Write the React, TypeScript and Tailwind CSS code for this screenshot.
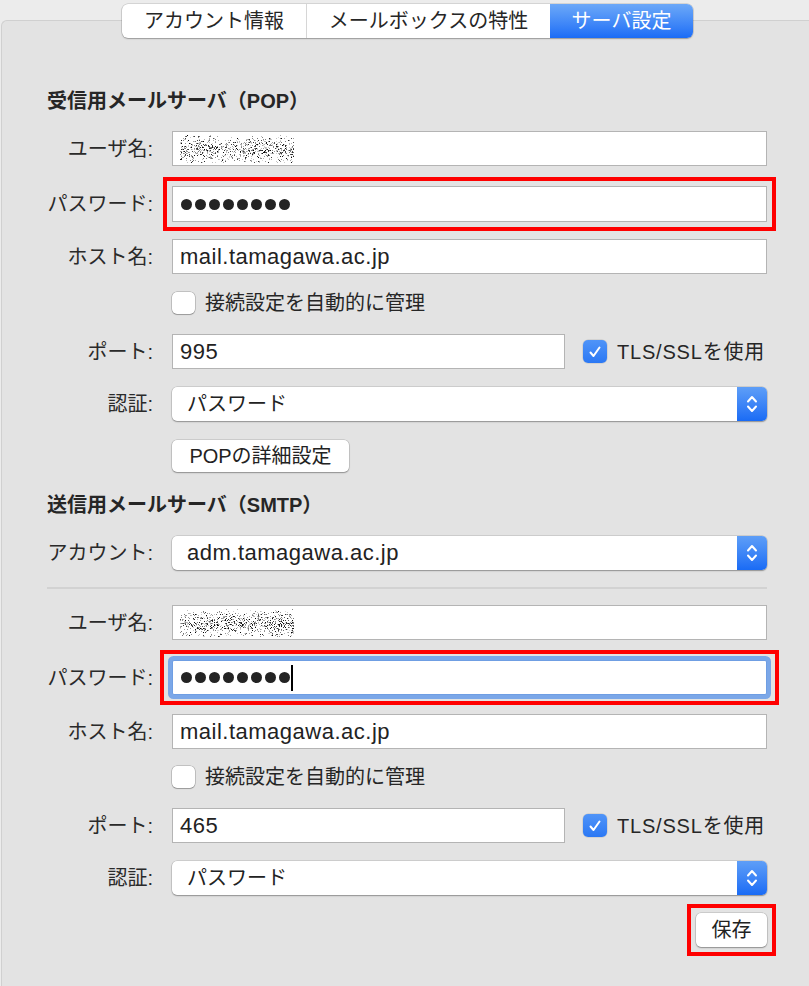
import { useMemo, type ReactNode } from "react";

function mulberry(seed: number) {
  let a = seed;
  return () => {
    a |= 0;
    a = (a + 0x6d2b79f5) | 0;
    let t = Math.imul(a ^ (a >>> 15), 1 | a);
    t = (t + Math.imul(t ^ (t >>> 7), 61 | t)) ^ t;
    return ((t ^ (t >>> 14)) >>> 0) / 4294967296;
  };
}

// blurred-out user name, drawn as speckle
function Noise({ seed }: { seed: number }) {
  const dots = useMemo(() => {
    const rnd = mulberry(seed);
    const out: { x: number; y: number; g: number }[] = [];
    for (let i = 0; i < 2400; i++) {
      const x = Math.floor(rnd() * 114);
      const y = Math.floor(rnd() * 29);
      const d = Math.abs(y - 15) / 15;
      if (rnd() < d * 0.7 + 0.3) continue;
      const dark = rnd() < 0.4 - d * 0.25;
      out.push({ x, y, g: dark ? Math.floor(rnd() * 90) : 110 + Math.floor(rnd() * 110) });
    }
    return out;
  }, [seed]);

  return (
    <svg width="114" height="29" className="shrink-0">
      {dots.map((d, i) => (
        <rect key={i} x={d.x} y={d.y} width="1" height="1" fill={`rgb(${d.g},${d.g},${d.g})`} />
      ))}
    </svg>
  );
}

function Dots() {
  return (
    <div className="flex gap-[3px]">
      {Array.from({ length: 8 }).map((_, i) => (
        <span key={i} className="h-[11px] w-[11px] rounded-full bg-[#232323]" />
      ))}
    </div>
  );
}

function Row({ label, children, className = "" }: { label: string; children: ReactNode; className?: string }) {
  return (
    <div className={`flex items-center ${className}`}>
      <div className="w-[106px] shrink-0 text-right text-[20px] text-[#2a2a2a]">{label}</div>
      <div className="ml-[19px] flex flex-1 items-center">{children}</div>
    </div>
  );
}

function Field({ children, className = "" }: { children?: ReactNode; className?: string }) {
  return (
    <div className={`flex h-[35px] items-center border border-[#b4b4b4] bg-white pl-[7px] text-[22px] tracking-[0.5px] text-[#222] ${className}`}>
      {children}
    </div>
  );
}

function Stepper() {
  return (
    <div className="flex w-[30px] items-center justify-center self-stretch rounded-r-[5px] bg-gradient-to-b from-[#5e9ef7] to-[#196bf5]">
      <svg width="12" height="22" viewBox="0 0 12 22">
        <path d="M2 8.5 L6 4 L10 8.5 M2 13.5 L6 18 L10 13.5" stroke="white" strokeWidth="2" fill="none" strokeLinecap="round" strokeLinejoin="round" />
      </svg>
    </div>
  );
}

function Select({ value, latin = false }: { value: string; latin?: boolean }) {
  return (
    <div className="flex h-[34px] flex-1 rounded-[5px] bg-white shadow-[0_0_0_0.5px_rgba(0,0,0,0.18),0_1px_1.5px_rgba(0,0,0,0.3)]">
      <div className={`flex flex-1 items-center pl-[15px] text-[#222] ${latin ? "text-[22px] tracking-[0.5px]" : "text-[20px]"}`}>{value}</div>
      <Stepper />
    </div>
  );
}

function Check({ checked = false }: { checked?: boolean }) {
  if (checked) {
    return (
      <span className="flex h-[23px] w-[24px] shrink-0 items-center justify-center rounded-[5px] bg-gradient-to-b from-[#4f94f8] to-[#2b78f4] shadow-[0_0_0_0.5px_rgba(0,0,0,0.15)]">
        <svg width="16" height="16" viewBox="0 0 16 16">
          <path d="M3.5 8.5 L6.5 12 L12.5 3.5" stroke="white" strokeWidth="2" fill="none" strokeLinecap="round" strokeLinejoin="round" />
        </svg>
      </span>
    );
  }
  return (
    <span className="h-[22px] w-[23px] shrink-0 rounded-[5px] bg-white shadow-[0_0_0_0.5px_rgba(0,0,0,0.3),0_1px_1px_rgba(0,0,0,0.2)]" />
  );
}

function Button({ children, className = "" }: { children: ReactNode; className?: string }) {
  return (
    <div className={`flex items-center justify-center rounded-[5px] bg-white text-[20px] text-[#222] shadow-[0_0_0_0.5px_rgba(0,0,0,0.2),0_1px_1.5px_rgba(0,0,0,0.3)] ${className}`}>
      {children}
    </div>
  );
}

function Heading({ children, className = "" }: { children: ReactNode; className?: string }) {
  return <div className={`h-[24px] text-[20px] font-bold leading-[24px] text-[#262626] ${className}`}>{children}</div>;
}

function Option({ label, checked = false }: { label: string; checked?: boolean }) {
  return (
    <div className="flex items-center gap-[10px] text-[20px] text-[#262626]">
      <Check checked={checked} />
      <span className={checked ? "tracking-[0.8px]" : ""}>{label}</span>
    </div>
  );
}

export default function App() {
  return (
    <div className="h-[986px] w-[809px] overflow-hidden bg-[#ececec] pt-[4px] leading-[22px] font-['Liberation_Sans','Noto_Sans_CJK_JP',sans-serif]">
      {/* Tabs */}
      <div className="relative z-10 ml-[122px] flex h-[34px] w-[571px] overflow-hidden rounded-[6px] bg-white text-[20px] text-[#262626] shadow-[0_0_0_0.5px_rgba(0,0,0,0.2),0_1px_1.5px_rgba(0,0,0,0.25)]">
        <div className="flex w-[185px] items-center justify-center border-r border-[#d6d6d6]">アカウント情報</div>
        <div className="flex w-[243px] items-center justify-center">メールボックスの特性</div>
        <div className="flex flex-1 items-center justify-center bg-gradient-to-b from-[#6ca8f8] to-[#1a6cf6] text-white">サーバ設定</div>
      </div>

      {/* Panel */}
      <div className="-mt-[18px] ml-[1px] h-[1000px] rounded-tl-[6px] border-l border-t border-[#d0d0d0] bg-[#e3e3e3] pl-[45px] pr-[42px] pt-[68px]">
        <Heading>受信用メールサーバ（POP）</Heading>

        <Row label="ユーザ名:" className="mt-[18px]">
          <Field className="flex-1">
            <Noise seed={17} />
          </Field>
        </Row>

        <Row label="パスワード:" className="mt-[20px]">
          <div className="relative flex-1">
            <Field className="h-[36px] pl-[8px]">
              <Dots />
            </Field>
            <div className="pointer-events-none absolute -inset-[9px] border-4 border-[#ff0000]" />
          </div>
        </Row>

        <Row label="ホスト名:" className="mt-[17px]">
          <Field className="flex-1">mail.tamagawa.ac.jp</Field>
        </Row>

        <Row label="" className="mt-[18px]">
          <Option label="接続設定を自動的に管理" />
        </Row>

        <Row label="ポート:" className="mt-[20px]">
          <Field className="w-[393px]">995</Field>
          <div className="ml-[18px]">
            <Option label="TLS/SSLを使用" checked />
          </div>
        </Row>

        <Row label="認証:" className="mt-[18px]">
          <Select value="パスワード" />
        </Row>

        <Row label="" className="mt-[19px]">
          <Button className="h-[32px] w-[177px]">POPの詳細設定</Button>
        </Row>

        <Heading className="mt-[21px]">送信用メールサーバ（SMTP）</Heading>

        <Row label="アカウント:" className="mt-[19px]">
          <Select value="adm.tamagawa.ac.jp" latin />
        </Row>

        <div className="mt-[17px] h-[2px] bg-[#d2d2d2]" />

        <Row label="ユーザ名:" className="mt-[16px]">
          <Field className="flex-1">
            <Noise seed={91} />
          </Field>
        </Row>

        <Row label="パスワード:" className="mt-[20px]">
          <div className="relative flex-1">
            <div className="flex h-[35px] items-center rounded-[2px] border border-[#6f9ee3] bg-white pl-[8px] shadow-[0_0_0_4px_#7ba7e8]">
              <Dots />
              <span className="ml-[1px] h-[26px] w-[2px] bg-black" />
            </div>
            <div className="pointer-events-none absolute -inset-x-[12px] -inset-y-[10px] border-4 border-[#ff0000]" />
          </div>
        </Row>

        <Row label="ホスト名:" className="mt-[19px]">
          <Field className="flex-1">mail.tamagawa.ac.jp</Field>
        </Row>

        <Row label="" className="mt-[17px]">
          <Option label="接続設定を自動的に管理" />
        </Row>

        <Row label="ポート:" className="mt-[20px]">
          <Field className="w-[393px]">465</Field>
          <div className="ml-[18px]">
            <Option label="TLS/SSLを使用" checked />
          </div>
        </Row>

        <Row label="認証:" className="mt-[18px]">
          <Select value="パスワード" />
        </Row>

        <div className="mt-[18px] flex justify-end">
          <div className="relative">
            <Button className="h-[34px] w-[71px]">保存</Button>
            <div className="pointer-events-none absolute -inset-[9px] border-4 border-[#ff0000]" />
          </div>
        </div>
      </div>
    </div>
  );
}
